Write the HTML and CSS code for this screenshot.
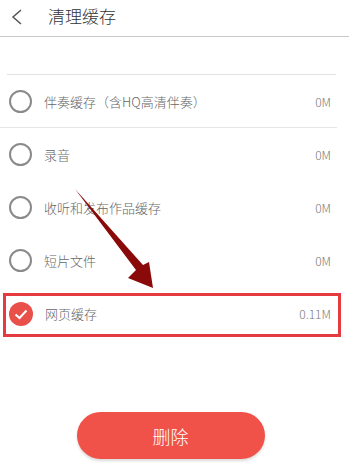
FILE: index.html
```html
<!DOCTYPE html>
<html lang="zh-CN">
<head>
<meta charset="utf-8">
<title>清理缓存</title>
<link rel="stylesheet" href="styles.css">
</head>
<body>
<div class="page">
  <header class="header">
    <svg class="back" width="12" height="16" viewBox="0 0 12 16"><path d="M10 1 L2 8 L10 15" fill="none" stroke="#555" stroke-width="1.5"/></svg>
    <span class="title">清理缓存</span>
  </header>
  <div class="spacer"></div>
  <ul class="list">
    <li class="row first"><span class="radio"></span><span class="label">伴奏缓存（含HQ高清伴奏）</span><span class="size">0M</span></li>
    <li class="row"><span class="radio"></span><span class="label">录音</span><span class="size">0M</span></li>
    <li class="row"><span class="radio"></span><span class="label">收听和发布作品缓存</span><span class="size">0M</span></li>
    <li class="row"><span class="radio"></span><span class="label">短片文件</span><span class="size">0M</span></li>
    <li class="row"><span class="radio checked"><svg width="24" height="24" viewBox="0 0 24 24"><path d="M6.5 12.5 L10.5 16 L17.5 8.5" fill="none" stroke="#fff" stroke-width="2"/></svg></span><span class="label">网页缓存</span><span class="size">0.11M</span></li>
  </ul>
  <div class="actions"><button class="delete">删除</button></div>
  <div class="highlight"></div>
  <svg class="arrow" width="349" height="470" viewBox="0 0 349 470">
    <polygon points="75,189 143,265 149,262 153,288 128,278 136,270" fill="#8a0a0a"/>
  </svg>
</div>
</body>
</html>
```
FILE: styles.css
```css
html, body { margin: 0; padding: 0; background: #fff; }
body { font-family: "Noto Sans CJK SC", "Noto Sans", sans-serif; font-weight: 300; }
.page { position: relative; width: 349px; height: 470px; overflow: hidden; }
.header { height: 36px; border-bottom: 1px solid #c8c8c8; display: flex; align-items: center; }
.back { margin-left: 11px; margin-top: -3px; }
.title { margin-left: 25px; font-size: 17px; color: #333; margin-top: -6px; }
.spacer { height: 37px; border-bottom: 1px solid #e2e2e2; margin: 0 13px 0 7px; }
.list { list-style: none; margin: 0; padding: 0; }
.row { height: 53px; display: flex; align-items: center; padding: 0 18px 0 9px; box-sizing: border-box; }
.row.first { border-bottom: 1px solid #e6e6e6; margin-right: 12px; padding-right: 6px; }
.radio { width: 23px; height: 23px; border: 2px solid #8a8a8a; border-radius: 50%; box-sizing: border-box; flex: none; display: flex; align-items: center; justify-content: center; }
.radio.checked { width: 24px; height: 24px; border: none; background: #e9504a; }
.label { margin-left: 12px; font-size: 13px; color: #666; flex: 1; }
.size { font-size: 12px; color: #777; }
.actions { display: flex; justify-content: center; margin-top: 72px; padding-right: 8px; }
.delete { width: 188px; height: 47px; border: none; border-radius: 24px; background: #f0524a; color: #fff; font-family: inherit; font-weight: 300; font-size: 18px; box-shadow: 0 2px 3px rgba(0,0,0,0.15); }
.highlight { position: absolute; left: 3px; top: 293px; width: 338px; height: 44px; border: 3px solid #e53a3f; box-sizing: border-box; }
.arrow { position: absolute; left: 0; top: 0; }
```
